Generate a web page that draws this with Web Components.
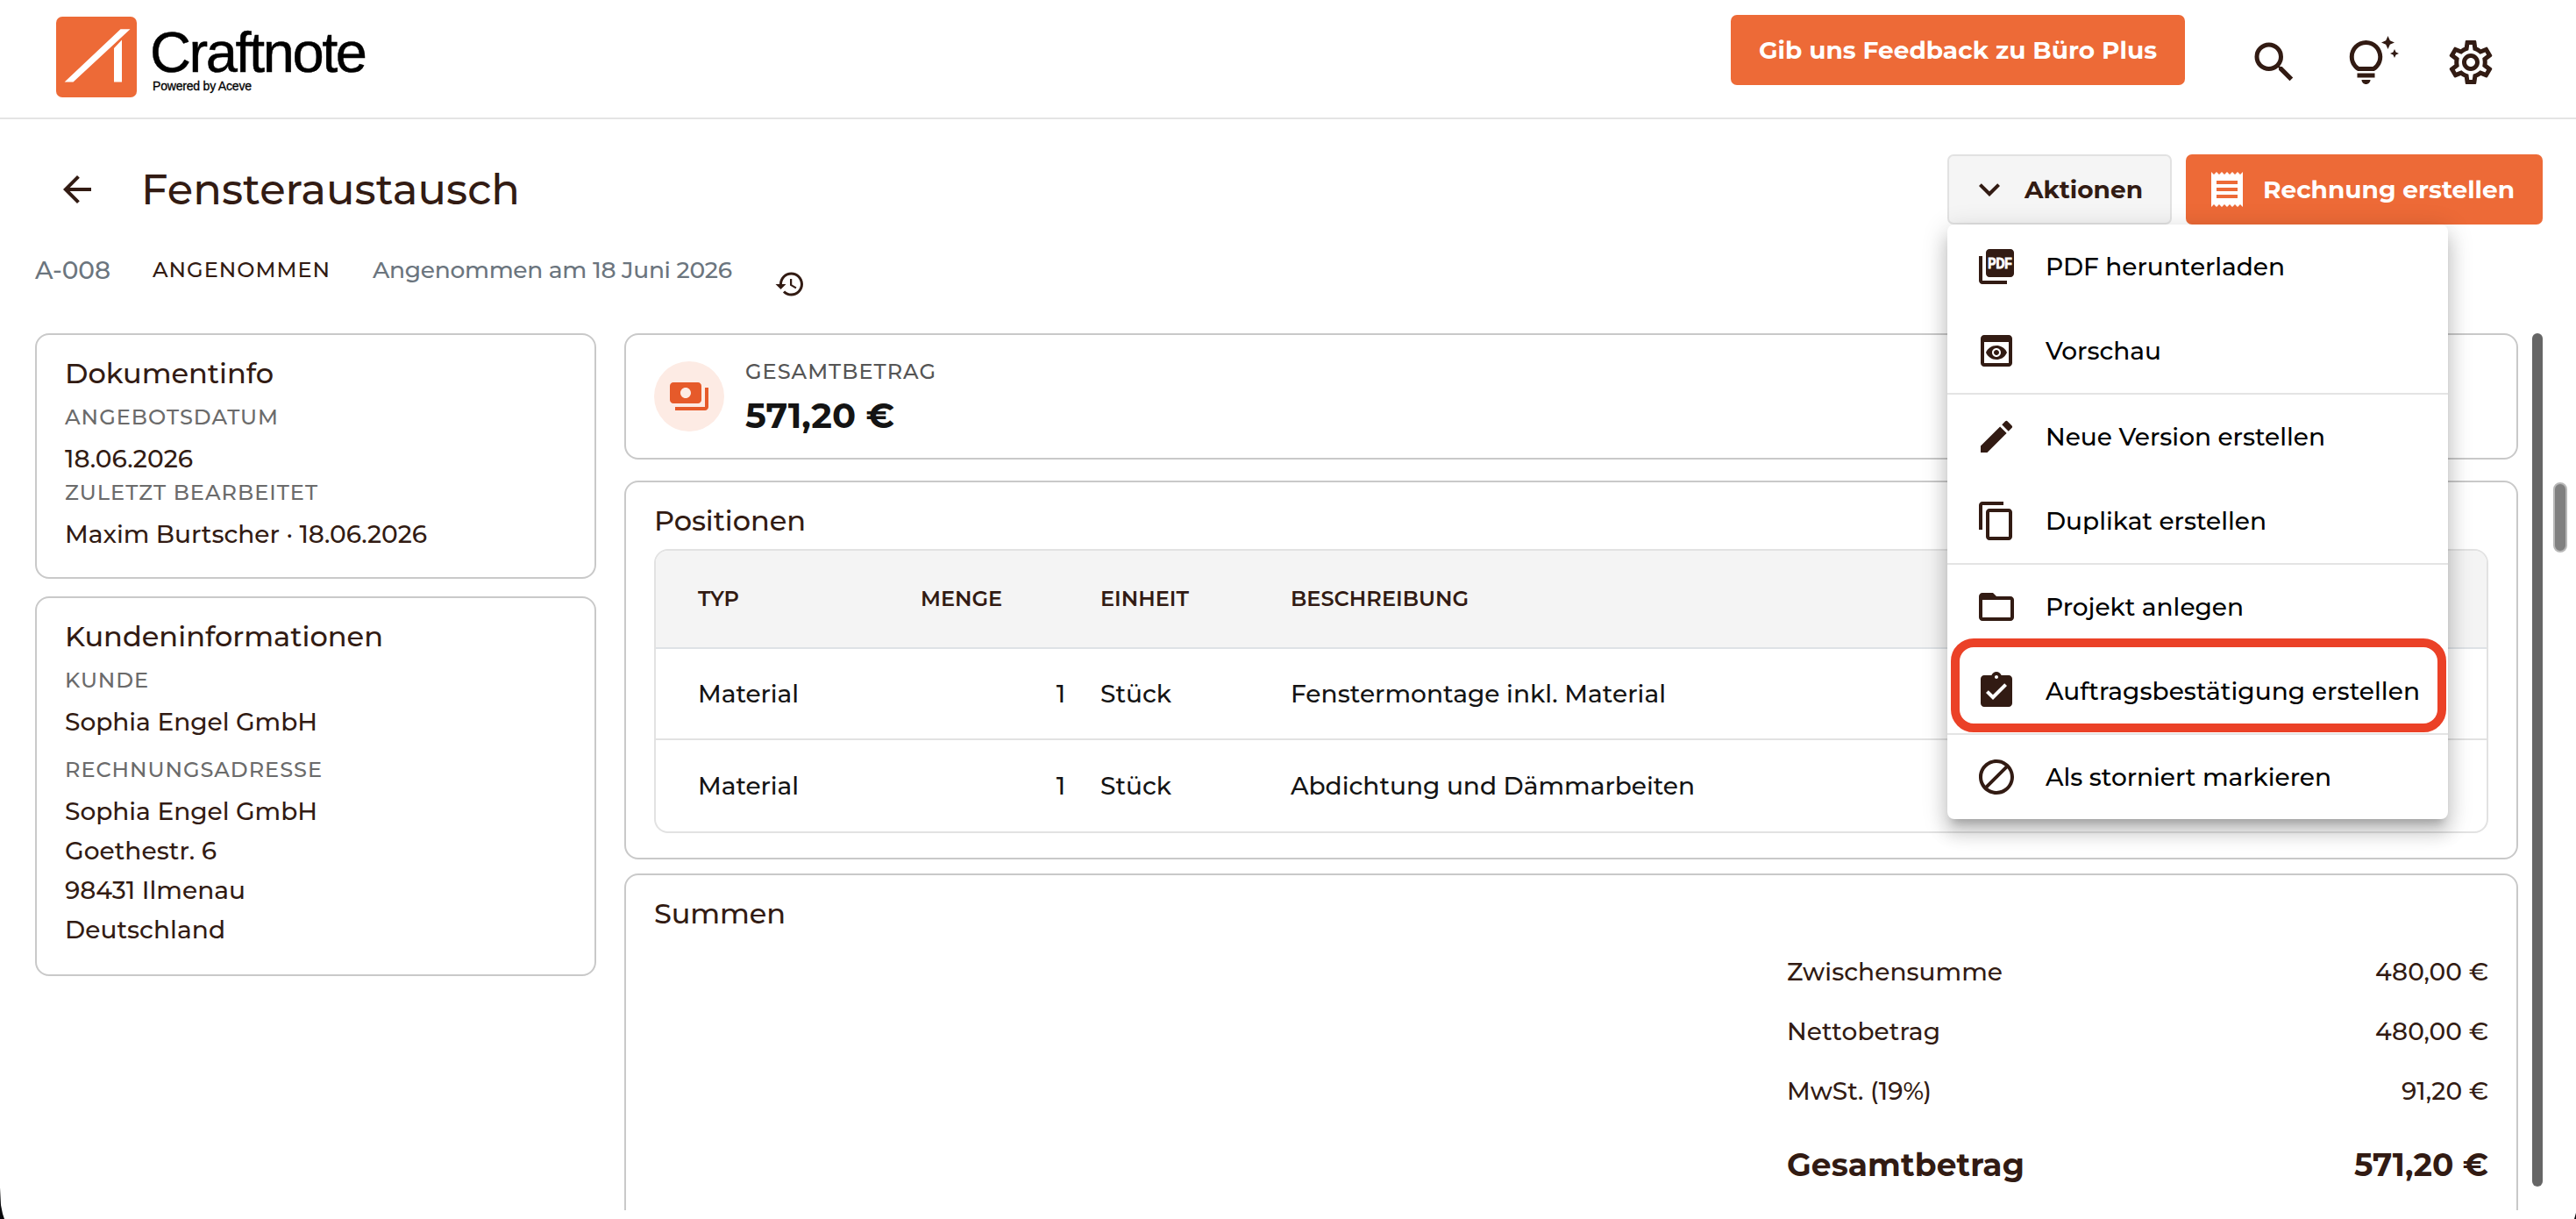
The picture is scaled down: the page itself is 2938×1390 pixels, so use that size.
<!DOCTYPE html>
<html lang="de">
<head>
<meta charset="utf-8">
<title>Craftnote</title>
<style>
  html, body { margin: 0; height: 100%; overflow: hidden; }
  body {
    background: #fff;
    color: #321b13;
    font-family: Montserrat, Inter, sans-serif;
    font-size: 28px;
    font-weight: 500;
  }
</style>
</head>
<body>
<craft-app></craft-app>

<script>
const icons = {
  search: 'M15.5 14h-.79l-.28-.27A6.471 6.471 0 0 0 16 9.5 6.5 6.5 0 1 0 9.5 16c1.61 0 3.09-.59 4.23-1.57l.27.28v.79l5 4.99L20.49 19l-4.99-5zm-6 0C7.01 14 5 11.99 5 9.5S7.01 5 9.5 5 14 7.01 14 9.5 11.99 14 9.5 14z',
  tips: 'M7 20h4c0 1.1-.9 2-2 2s-2-.9-2-2zm-2-1h8v-2H5v2zm11.5-9.5c0 3.82-2.66 5.86-3.77 6.5H5.27c-1.11-.64-3.77-2.68-3.77-6.5C1.5 5.36 4.86 2 9 2s7.5 3.36 7.5 7.5zm-2 0C14.5 6.47 12.03 4 9 4S3.5 6.47 3.5 9.5c0 2.47 1.49 3.89 2.35 4.5h6.3c.86-.61 2.35-2.03 2.35-4.5zm6.87-2.13L20 8l1.37.63L22 10l.63-1.37L24 8l-1.37-.63L22 6l-.63 1.37zM19 6l.94-2.06L22 3l-2.06-.94L19 0l-.94 2.06L16 3l2.06.94L19 6z',
  settings: 'M19.43 12.98c.04-.32.07-.64.07-.98 0-.34-.03-.66-.07-.98l2.11-1.65c.19-.15.24-.42.12-.64l-2-3.46c-.09-.16-.26-.25-.44-.25-.06 0-.12.01-.17.03l-2.49 1c-.52-.4-1.08-.73-1.69-.98l-.38-2.65C14.46 2.18 14.25 2 14 2h-4c-.25 0-.46.18-.49.42l-.38 2.65c-.61.25-1.17.59-1.69.98l-2.49-1c-.06-.02-.12-.03-.18-.03-.17 0-.34.09-.43.25l-2 3.46c-.13.22-.07.49.12.64l2.11 1.65c-.04.32-.07.65-.07.98 0 .33.03.66.07.98l-2.11 1.65c-.19.15-.24.42-.12.64l2 3.46c.09.16.26.25.44.25.06 0 .12-.01.17-.03l2.49-1c.52.4 1.08.73 1.69.98l.38 2.65c.03.24.24.42.49.42h4c.25 0 .46-.18.49-.42l.38-2.65c.61-.25 1.17-.59 1.69-.98l2.49 1c.06.02.12.03.18.03.17 0 .34-.09.43-.25l2-3.46c.12-.22.07-.49-.12-.64l-2.11-1.65zm-1.98-1.71c.04.31.05.52.05.73 0 .21-.02.43-.05.73l-.14 1.13.89.7 1.08.84-.7 1.21-1.27-.51-1.04-.42-.9.68c-.43.32-.84.56-1.25.73l-1.06.43-.16 1.13-.2 1.35h-1.4l-.19-1.35-.16-1.13-1.06-.43c-.43-.18-.83-.41-1.23-.71l-.91-.7-1.06.43-1.27.51-.7-1.21 1.08-.84.89-.7-.14-1.13c-.03-.31-.05-.54-.05-.74s.02-.43.05-.73l.14-1.13-.89-.7-1.08-.84.7-1.21 1.27.51 1.04.42.9-.68c.43-.32.84-.56 1.25-.73l1.06-.43.16-1.13.2-1.35h1.39l.19 1.35.16 1.13 1.06.43c.43.18.83.41 1.23.71l.91.7 1.06-.43 1.27-.51.7 1.21-1.07.85-.89.7.14 1.13zM12 8c-2.21 0-4 1.79-4 4s1.79 4 4 4 4-1.79 4-4-1.79-4-4-4zm0 6c-1.1 0-2-.9-2-2s.9-2 2-2 2 .9 2 2-.9 2-2 2z',
  back: 'm7.825 13 5.6 5.6L12 20l-8-8 8-8 1.425 1.4-5.6 5.6H20v2H7.825Z',
  history: 'M13 3c-4.97 0-9 4.03-9 9H1l3.89 3.89.07.14L9 12H6c0-3.87 3.13-7 7-7s7 3.13 7 7-3.13 7-7 7c-1.93 0-3.68-.79-4.94-2.06l-1.42 1.42C8.27 19.99 10.51 21 13 21c4.97 0 9-4.03 9-9s-4.03-9-9-9zm-1 5v5l4.28 2.54.72-1.21-3.5-2.08V8H12z',
  expand: 'M16.59 8.59 12 13.17 7.41 8.59 6 10l6 6 6-6z',
  receipt: 'M18 17H6v-2h12v2zm0-4H6v-2h12v2zm0-4H6V7h12v2zM3 22l1.5-1.5L6 22l1.5-1.5L9 22l1.5-1.5L12 22l1.5-1.5L15 22l1.5-1.5L18 22l1.5-1.5L21 22V2l-1.5 1.5L18 2l-1.5 1.5L15 2l-1.5 1.5L12 2l-1.5 1.5L9 2 7.5 3.5 6 2 4.5 3.5 3 2v20z',
  pdf: 'M20 2H8c-1.1 0-2 .9-2 2v12c0 1.1.9 2 2 2h12c1.1 0 2-.9 2-2V4c0-1.1-.9-2-2-2zM4 6H2v14c0 1.1.9 2 2 2h14v-2H4V6z',
  preview: 'M19 3H5c-1.11 0-2 .9-2 2v14c0 1.1.89 2 2 2h14c1.1 0 2-.9 2-2V5c0-1.1-.89-2-2-2zm0 16H5V7h14v12zm-5.5-6c0 .83-.67 1.5-1.5 1.5s-1.5-.67-1.5-1.5.67-1.5 1.5-1.5 1.5.67 1.5 1.5zM12 9c-2.73 0-5.06 1.66-6 4 .94 2.34 3.27 4 6 4s5.06-1.66 6-4c-.94-2.34-3.27-4-6-4zm0 6.5c-1.38 0-2.5-1.12-2.5-2.5s1.12-2.5 2.5-2.5 2.5 1.12 2.5 2.5-1.12 2.5-2.5 2.5z',
  edit: 'M3 17.25V21h3.75L17.81 9.94l-3.75-3.75L3 17.25zM20.71 7.04a.996.996 0 0 0 0-1.41l-2.34-2.34a.996.996 0 0 0-1.41 0l-1.83 1.83 3.75 3.75 1.83-1.83z',
  copy: 'M16 1H4c-1.1 0-2 .9-2 2v14h2V3h12V1zm3 4H8c-1.1 0-2 .9-2 2v14c0 1.1.9 2 2 2h11c1.1 0 2-.9 2-2V7c0-1.1-.9-2-2-2zm0 16H8V7h11v14z',
  folder: 'M20 6h-8l-2-2H4c-1.1 0-1.99.9-1.99 2L2 18c0 1.1.9 2 2 2h16c1.1 0 2-.9 2-2V8c0-1.1-.9-2-2-2zm0 12H4V8h16v10z',
  assignment: 'M19 3h-4.18C14.4 1.84 13.3 1 12 1c-1.3 0-2.4.84-2.82 2H5c-1.1 0-2 .9-2 2v14c0 1.1.9 2 2 2h14c1.1 0 2-.9 2-2V5c0-1.1-.9-2-2-2zm-7 0c.55 0 1 .45 1 1s-.45 1-1 1-1-.45-1-1 .45-1 1-1zm-2 14l-4-4 1.41-1.41L10 14.17l6.59-6.59L18 9l-8 8z',
  block: 'M12 2C6.5 2 2 6.5 2 12s4.5 10 10 10 10-4.5 10-10S17.5 2 12 2zM4 12c0-4.4 3.6-8 8-8 1.8 0 3.5.6 4.9 1.7L5.7 16.9C4.6 15.5 4 13.8 4 12zm8 8c-1.8 0-3.5-.6-4.9-1.7L18.3 7.1C19.4 8.5 20 10.2 20 12c0 4.4-3.6 8-8 8z',
  payments: 'M19 14V6c0-1.1-.9-2-2-2H3c-1.1 0-2 .9-2 2v8c0 1.1.9 2 2 2h14c1.1 0 2-.9 2-2zm-9-1c-1.66 0-3-1.34-3-3s1.34-3 3-3 3 1.34 3 3-1.34 3-3 3zm13-6v11c0 1.1-.9 2-2 2H4v-2h17V7h2z'
}

/** Attaches an open shadow root filled with the given markup. */
function render (el, html) {
  el.attachShadow({ mode: 'open' })
  const template = document.createElement('template')
  template.innerHTML = html
  el.shadowRoot.appendChild(template.content.cloneNode(true))
}

/**
 * Icon on a 24 unit grid.
 * @property {string} name - key of the icon table
 * @property {number} size - edge length in px
 */
class UiIcon extends HTMLElement {
  constructor () {
    super()
    const name = this.getAttribute('name')
    const size = this.getAttribute('size') || 48
    const label = name === 'pdf'
      ? '<text x="14" y="12.8" text-anchor="middle" font-family="Liberation Sans" font-weight="700" font-size="7.8" textLength="13.8" lengthAdjust="spacingAndGlyphs" fill="#fff" stroke="#fff" stroke-width=".45">PDF</text>'
      : ''
    render(this, `
      <style>
        :host { display: block; flex: none; width: ${size}px; height: ${size}px; }
        svg { display: block; width: 100%; height: 100%; fill: currentColor; }
      </style>
      <svg viewBox="0 0 24 24"><path d="${icons[name]}"/>${label}</svg>
    `)
  }
}

/**
 * Single line of text, tracked so that it fills a given measure.
 * @property {number} measure - line width in px
 */
class FitText extends HTMLElement {
  constructor () {
    super()
    render(this, `
      <style>
        :host { display: block; white-space: nowrap; }
        span { display: block; width: max-content; }
      </style>
      <span><slot></slot></span>
    `)
  }

  connectedCallback () {
    const span = this.shadowRoot.querySelector('span')
    const count = this.textContent.length
    const spare = Number(this.getAttribute('measure')) - span.getBoundingClientRect().width
    const spacing = spare / Math.max(count - 1, 1)
    span.style.letterSpacing = `${spacing}px`
    span.style.marginRight = `${-spacing}px`
  }
}

class CraftLogo extends HTMLElement {
  constructor () {
    super()
    render(this, `
      <style>
        :host { display: flex; gap: 15px; color: #000; font-family: "Liberation Sans", Arial, sans-serif; font-weight: 400; }
        svg { display: block; width: 92px; height: 92px; }
        .name { font-size: 65px; line-height: 56px; padding-top: 13px; -webkit-text-stroke: .5px; }
        .by { font-size: 14px; line-height: 14px; margin-top: 3px; padding-left: 3px; -webkit-text-stroke: .3px; }
      </style>
      <svg viewBox="0 0 92 92">
        <rect width="92" height="92" rx="7" fill="#ed6a37"/>
        <path fill="#fff" d="M73.5 14.3H84.5L19.5 74.5H9.6ZM75 26.5V74.5H66V36Z"/>
      </svg>
      <div>
        <fit-text class="name" measure="248">Craftnote</fit-text>
        <fit-text class="by" measure="113">Powered by Aceve</fit-text>
      </div>
    `)
  }
}

class UiButton extends HTMLElement {
  constructor () {
    super()
    render(this, `
      <style>
        :host {
          display: flex; align-items: center; box-sizing: border-box; height: 80px;
          border-radius: 7px; background: #ed6a37; color: #fff; font-weight: 700; line-height: 40px;
        }
        :host([variant="plain"]) { background: #f5f5f5; color: #321b13; border: 2px solid #e2e2e2; }
      </style>
      <slot></slot>
    `)
  }
}

class AppHeader extends HTMLElement {
  constructor () {
    super()
    render(this, `
      <style>
        :host {
          display: flex; align-items: flex-start; box-sizing: border-box; height: 136px;
          padding: 17px 90px 0 64px; border-bottom: 2px solid #e4e4e4;
        }
        craft-logo { margin-top: 2px; margin-right: auto; }
        ui-button { padding: 0 32px; margin-right: 72px; }
        nav { display: flex; gap: 52px; padding-top: 24px; }
      </style>
      <craft-logo></craft-logo>
      <ui-button><fit-text measure="454">Gib uns Feedback zu Büro Plus</fit-text></ui-button>
      <nav>
        <ui-icon name="search" size="60"></ui-icon>
        <ui-icon name="tips" size="60"></ui-icon>
        <ui-icon name="settings" size="60"></ui-icon>
      </nav>
    `)
  }
}

/**
 * Entry of the action menu.
 * @property {string} icon - icon name
 * @property {bool} marked - draws the red frame around the entry
 */
class MenuItem extends HTMLElement {
  constructor () {
    super()
    render(this, `
      <style>
        :host { display: flex; align-items: center; gap: 32px; position: relative; height: 96px; padding-left: 32px; }
        ui-icon { color: #321b13; }
        :host([marked])::after {
          content: ""; position: absolute; inset: -12px 2px 1px 4px;
          border: 10px solid #eb4127; border-radius: 26px;
        }
      </style>
      <ui-icon name="${this.getAttribute('icon')}"></ui-icon>
      <slot></slot>
    `)
  }
}

class ActionMenu extends HTMLElement {
  constructor () {
    super()
    render(this, `
      <style>
        :host {
          display: block; width: 571px; background: #fff; color: #000; border-radius: 8px;
          box-shadow: 0 10px 10px -6px rgba(0,0,0,.2), 0 16px 20px 2px rgba(0,0,0,.14), 0 6px 28px 4px rgba(0,0,0,.12);
        }
        hr { margin: 0; border: 0; height: 2px; background: #e4e4e4; }
      </style>
      <menu-item icon="pdf"><fit-text measure="273">PDF herunterladen</fit-text></menu-item>
      <menu-item icon="preview"><fit-text measure="132">Vorschau</fit-text></menu-item>
      <hr>
      <menu-item icon="edit"><fit-text measure="319">Neue Version erstellen</fit-text></menu-item>
      <menu-item icon="copy"><fit-text measure="252">Duplikat erstellen</fit-text></menu-item>
      <hr>
      <menu-item icon="folder"><fit-text measure="226">Projekt anlegen</fit-text></menu-item>
      <menu-item icon="assignment" marked><fit-text measure="427">Auftragsbestätigung erstellen</fit-text></menu-item>
      <hr>
      <menu-item icon="block"><fit-text measure="326">Als storniert markieren</fit-text></menu-item>
    `)
  }
}

class DocumentHead extends HTMLElement {
  constructor () {
    super()
    render(this, `
      <style>
        :host { display: block; }
        .bar { display: flex; align-items: center; gap: 16px; height: 80px; padding: 40px 38px 0 64px; }
        h1 { margin: 0 auto 0 33px; font-size: 48px; font-weight: 500; line-height: 80px; }
        .actions { position: relative; }
        .toggle { width: 256px; padding-left: 22px; }
        .toggle fit-text { margin-left: 16px; }
        .create { width: 407px; padding-left: 23px; }
        .create fit-text { margin-left: 17px; }
        action-menu { position: absolute; top: 100%; left: 0; z-index: 2; }
        .meta { display: flex; align-items: flex-start; gap: 48px; height: 92px; padding: 32px 40px 0; line-height: 40px; color: #6b757e; }
        .state { font-size: 24px; color: #321b13; }
        .date { font-size: 26.5px; margin-left: 1px; }
        .meta ui-icon { margin-top: 18px; color: #321b13; }
      </style>
      <div class="bar">
        <ui-icon name="back"></ui-icon>
        <h1><fit-text measure="432">Fensteraustausch</fit-text></h1>
        <div class="actions">
          <ui-button variant="plain" class="toggle">
            <ui-icon name="expand"></ui-icon>
            <fit-text measure="135">Aktionen</fit-text>
          </ui-button>
          <action-menu></action-menu>
        </div>
        <ui-button class="create">
          <ui-icon name="receipt"></ui-icon>
          <fit-text measure="287">Rechnung erstellen</fit-text>
        </ui-button>
      </div>
      <div class="meta">
        <fit-text measure="86">A-008</fit-text>
        <fit-text class="state" measure="202">ANGENOMMEN</fit-text>
        <fit-text class="date" measure="410">Angenommen am 18 Juni 2026</fit-text>
        <ui-icon name="history" size="36"></ui-icon>
      </div>
    `)
  }
}

/** Bordered box with an optional heading slot. */
class InfoCard extends HTMLElement {
  constructor () {
    super()
    render(this, `
      <style>
        :host { display: block; box-sizing: border-box; padding: 20px 32px; border: 2px solid #c9c9c9; border-radius: 16px; background: #fff; }
        ::slotted([slot="title"]) { font-size: 32px; line-height: 48px; }
      </style>
      <slot name="title"></slot>
      <slot></slot>
    `)
  }
}

class SideColumn extends HTMLElement {
  constructor () {
    super()
    render(this, `
      <style>
        :host { display: flex; flex-direction: column; gap: 20px; width: 640px; }
        .label { font-size: 24px; line-height: 32px; color: #6b6b6b; margin-bottom: 9px; }
        .value { line-height: 45px; }
        [slot="title"] { margin-bottom: 10px; }
        .document { flex: none; height: 280px; }
        .customer { flex: none; height: 433px; }
        .customer .value + .label { margin-top: 16px; }
      </style>
      <info-card class="document">
        <fit-text slot="title" measure="238">Dokumentinfo</fit-text>
        <fit-text class="label" measure="243">ANGEBOTSDATUM</fit-text>
        <fit-text class="value" measure="146">18.06.2026</fit-text>
        <fit-text class="label" measure="288">ZULETZT BEARBEITET</fit-text>
        <fit-text class="value" measure="413">Maxim Burtscher · 18.06.2026</fit-text>
      </info-card>
      <info-card class="customer">
        <fit-text slot="title" measure="363">Kundeninformationen</fit-text>
        <fit-text class="label" measure="95">KUNDE</fit-text>
        <fit-text class="value" measure="288">Sophia Engel GmbH</fit-text>
        <fit-text class="label" measure="293">RECHNUNGSADRESSE</fit-text>
        <fit-text class="value" measure="288">Sophia Engel GmbH</fit-text>
        <fit-text class="value" measure="173">Goethestr. 6</fit-text>
        <fit-text class="value" measure="206">98431 Ilmenau</fit-text>
        <fit-text class="value" measure="183">Deutschland</fit-text>
      </info-card>
    `)
  }
}

class TotalCard extends HTMLElement {
  constructor () {
    super()
    render(this, `
      <style>
        :host { display: block; }
        info-card { height: 144px; padding-top: 30px; }
        .row { display: flex; gap: 24px; }
        .badge { display: flex; align-items: center; justify-content: center; width: 80px; height: 80px; border-radius: 50%; background: #fdebe4; color: #e65a2a; }
        .text { margin-top: -4px; }
        .label { font-size: 24px; line-height: 32px; color: #555; }
        .amount { margin-top: 6px; font-size: 40px; line-height: 56px; font-weight: 700; color: #141414; }
      </style>
      <info-card>
        <div class="row">
          <div class="badge"><ui-icon name="payments"></ui-icon></div>
          <div class="text">
            <fit-text class="label" measure="217">GESAMTBETRAG</fit-text>
            <fit-text class="amount" measure="170">571,20 €</fit-text>
          </div>
        </div>
      </info-card>
    `)
  }
}

class PositionTable extends HTMLElement {
  constructor () {
    super()
    render(this, `
      <style>
        :host { display: block; margin-top: 8px; border: 2px solid #e2e2e2; border-radius: 16px; overflow: hidden; color: #141414; }
        .row {
          display: grid; grid-template-columns: 254px 165px 257px 1fr; align-items: center;
          box-sizing: border-box; height: 104px; padding-left: 48px;
        }
        .head { height: 112px; padding-bottom: 1px; background: #f4f4f4; border-bottom: 2px solid #dee2e6; color: #321b13; font-size: 24px; font-weight: 600; }
        .body { border-bottom: 2px solid #e2e2e2; }
        .num { text-align: right; }
        .unit { padding-left: 40px; }
      </style>
      <div class="row head">
        <fit-text measure="47">TYP</fit-text>
        <fit-text measure="93">MENGE</fit-text>
        <fit-text class="unit" measure="101">EINHEIT</fit-text>
        <fit-text measure="203">BESCHREIBUNG</fit-text>
      </div>
      <div class="row body">
        <fit-text measure="115">Material</fit-text>
        <div class="num">1</div>
        <fit-text class="unit" measure="81">Stück</fit-text>
        <fit-text measure="428">Fenstermontage inkl. Material</fit-text>
      </div>
      <div class="row">
        <fit-text measure="115">Material</fit-text>
        <div class="num">1</div>
        <fit-text class="unit" measure="81">Stück</fit-text>
        <fit-text measure="461">Abdichtung und Dämmarbeiten</fit-text>
      </div>
    `)
  }
}

class SumList extends HTMLElement {
  constructor () {
    super()
    render(this, `
      <style>
        :host { display: block; width: 800px; margin: 8px 0 0 auto; }
        div { display: flex; justify-content: space-between; line-height: 68px; }
        .total { line-height: 100px; font-size: 36px; font-weight: 700; }
      </style>
      <div><fit-text measure="246">Zwischensumme</fit-text><fit-text measure="129">480,00 €</fit-text></div>
      <div><fit-text measure="175">Nettobetrag</fit-text><fit-text measure="129">480,00 €</fit-text></div>
      <div><fit-text measure="165">MwSt. (19%)</fit-text><fit-text measure="99">91,20 €</fit-text></div>
      <div class="total"><fit-text measure="271">Gesamtbetrag</fit-text><fit-text measure="153">571,20 €</fit-text></div>
    `)
  }
}

class MainColumn extends HTMLElement {
  constructor () {
    super()
    render(this, `
      <style>
        :host { display: block; width: 2160px; }
        total-card { margin-bottom: 24px; }
        .positions { height: 432px; margin-bottom: 16px; }
        .sums { height: 480px; }
      </style>
      <total-card></total-card>
      <info-card class="positions">
        <fit-text slot="title" measure="173">Positionen</fit-text>
        <position-table></position-table>
      </info-card>
      <info-card class="sums">
        <fit-text slot="title" measure="150">Summen</fit-text>
        <sum-list></sum-list>
      </info-card>
    `)
  }
}

class CraftApp extends HTMLElement {
  constructor () {
    super()
    render(this, `
      <style>
        :host { display: block; position: relative; height: 1390px; overflow: hidden; }
        main { display: flex; align-items: flex-start; height: 1000px; padding-left: 40px; overflow: hidden; }
        main-column { margin: 0 16px 0 32px; flex: none; }
        side-column { flex: none; }
        .track { width: 12px; height: 973px; border-radius: 6px; background: #666; }
        .thumb { position: absolute; left: 2912px; top: 550px; box-sizing: border-box; width: 16px; height: 80px; border: 2px solid #b8b8b8; border-radius: 8px; background: #808080; }
        .corner { position: absolute; bottom: 0; background: #0a0a0c; }
        .left { left: 0; width: 5px; height: 36px; clip-path: polygon(0 0, 1px 20px, 3px 30px, 5px 36px, 0 36px); }
        .right { right: 0; width: 2px; height: 7px; clip-path: polygon(100% 0, 100% 100%, 0 100%); }
      </style>
      <app-header></app-header>
      <document-head></document-head>
      <main>
        <side-column></side-column>
        <main-column></main-column>
        <div class="track"></div>
      </main>
      <div class="thumb"></div>
      <div class="corner left"></div>
      <div class="corner right"></div>
    `)
  }
}

window.customElements.define('craft-app', CraftApp)
window.customElements.define('app-header', AppHeader)
window.customElements.define('craft-logo', CraftLogo)
window.customElements.define('document-head', DocumentHead)
window.customElements.define('side-column', SideColumn)
window.customElements.define('main-column', MainColumn)
window.customElements.define('total-card', TotalCard)
window.customElements.define('position-table', PositionTable)
window.customElements.define('sum-list', SumList)
window.customElements.define('action-menu', ActionMenu)
window.customElements.define('menu-item', MenuItem)
window.customElements.define('info-card', InfoCard)
window.customElements.define('ui-button', UiButton)
window.customElements.define('ui-icon', UiIcon)
// Last, so that every line is measured with its final font.
window.customElements.define('fit-text', FitText)
</script>
</body>
</html>
